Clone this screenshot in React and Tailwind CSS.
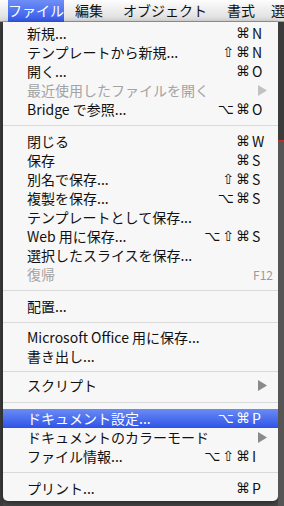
const items = [
  [
    { label: "新規...", keys: "⌘", key: "N" },
    { label: "テンプレートから新規...", keys: "⇧⌘", key: "N" },
    { label: "開く...", keys: "⌘", key: "O" },
    { label: "最近使用したファイルを開く", disabled: true, sub: true },
    { label: "Bridge で参照...", keys: "⌥⌘", key: "O" },
  ],
  [
    { label: "閉じる", keys: "⌘", key: "W" },
    { label: "保存", keys: "⌘", key: "S" },
    { label: "別名で保存...", keys: "⇧⌘", key: "S" },
    { label: "複製を保存...", keys: "⌥⌘", key: "S" },
    { label: "テンプレートとして保存..." },
    { label: "Web 用に保存...", keys: "⌥⇧⌘", key: "S" },
    { label: "選択したスライスを保存..." },
    { label: "復帰", disabled: true, fkey: "F12" },
  ],
  [{ label: "配置..." }],
  [
    { label: "Microsoft Office 用に保存..." },
    { label: "書き出し..." },
  ],
  [{ label: "スクリプト", sub: true }],
  [
    { label: "ドキュメント設定...", keys: "⌥⌘", key: "P", active: true },
    { label: "ドキュメントのカラーモード", sub: true },
    { label: "ファイル情報...", keys: "⌥⇧⌘", key: "I" },
  ],
  [{ label: "プリント...", keys: "⌘", key: "P" }],
];

const sepHeights = ["h-[13px]", "h-[13px]", "h-[12px]", "h-[10px]", "h-[14px]", "h-[13px]"];

const font = { fontFamily: '"Noto Sans CJK JP", "Noto Sans", sans-serif' };
const symFont = { fontFamily: '"DejaVu Sans", "Noto Sans CJK JP", sans-serif' };

const Arrow = ({ color }) => (
  <svg width="9" height="11" viewBox="0 0 9 11" className="mr-[-2px]">
    <path d="M0 0 L9 5.5 L0 11 Z" fill={color} />
  </svg>
);

const Row = ({ item }) => {
  const text = item.active
    ? "text-white"
    : item.disabled
    ? "text-[#a3a3a3]"
    : "text-[#111]";
  return (
    <div
      className={`h-[19px] flex items-center pl-[24px] pr-[13px] text-[14px] leading-[19px] ${text} ${
        item.active ? "bg-gradient-to-b from-[#6b8af3] to-[#2f52e8]" : ""
      }`}
    >
      <span className="flex-1 whitespace-nowrap">{item.label}</span>
      {item.key && (
        <span className="flex items-center text-[14px]" style={symFont}>
          <span className="tracking-[2px]">{item.keys}</span>
          <span className="w-[13px] text-left" style={font}>
            {item.key}
          </span>
        </span>
      )}
      {item.sub && <Arrow color={item.disabled ? "#c2c2c2" : "#8a8a8a"} />}
      {item.fkey && (
        <span className="text-[12px] mr-[-8px] text-[#9a9a9a]">{item.fkey}</span>
      )}
    </div>
  );
};

export default function App() {
  return (
    <div className="w-[284px] h-[506px] bg-[#4a4a4a] overflow-hidden flex flex-col" style={font}>
      <div className="h-[22px] flex items-center bg-gradient-to-b from-[#fdfdfd] to-[#dcdcdc] border-b border-[#9c9c9c] text-[14px] text-[#111] whitespace-nowrap">
        <div className="h-[22px] ml-[8px] w-[68px] flex items-center justify-center text-white bg-gradient-to-b from-[#6f8ef5] to-[#3557ea]">
          ファイル
        </div>
        <div className="ml-[11px]">編集</div>
        <div className="ml-[20px]">オブジェクト</div>
        <div className="ml-[20px]">書式</div>
        <div className="ml-[16px]">選</div>
      </div>
      <div className="flex-1 flex">
        <div className="w-[3px] bg-[#3e3e3e]" />
        <div className="w-[275px] self-start bg-[#f7f7f7] rounded-b-[5px] pt-[2px] pb-[3px] shadow-[0_2px_6px_rgba(0,0,0,0.5)]">
          {items.map((group, gi) => (
            <div key={gi}>
              {group.map((it, i) => (
                <Row key={i} item={it} />
              ))}
              {gi < items.length - 1 && (
                <div className={`${sepHeights[gi]} flex items-center`}>
                  <div className="w-full h-px bg-[#d9d9d9]" />
                </div>
              )}
            </div>
          ))}
        </div>
        <div className="flex-1 flex flex-col">
          <div className="h-[118px] bg-[#3b3b3b]" />
          <div className="h-px bg-[#c83030]" />
          <div className="flex-1 bg-[#555]" />
        </div>
      </div>
    </div>
  );
}
